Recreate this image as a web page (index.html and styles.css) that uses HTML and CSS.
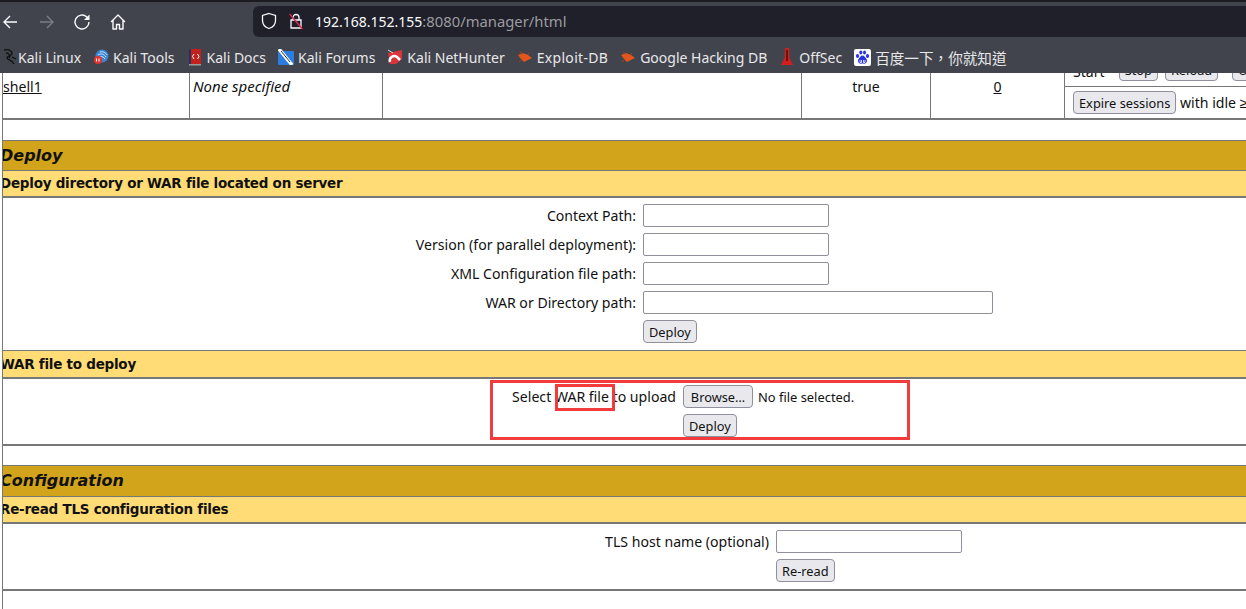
FILE: index.html

```html
<!DOCTYPE html>
<html>
<head>
  <title>/manager</title>
  <link rel="stylesheet" href="styles.css">
</head>
<body>
  <header class="browser">
    <div class="toolbar">
      <svg class="tool-icon" width="20" height="20" viewBox="0 0 20 20"><path d="M16 10H3M9 4l-6 6 6 6" fill="none" stroke="#fbfbfe" stroke-width="1.4"/></svg>
      <svg class="tool-icon" width="20" height="20" viewBox="0 0 20 20"><path d="M3 10h13M10 4l6 6-6 6" fill="none" stroke="#7c7e84" stroke-width="1.4"/></svg>
      <svg class="tool-icon" width="20" height="20" viewBox="0 0 20 20"><path d="M17 10a7 7 0 1 1-2.200-5.100L17 7" fill="none" stroke="#fbfbfe" stroke-width="1.4"/><path d="M17.500 2.500v5.500H12z" fill="#fbfbfe"/></svg>
      <svg class="tool-icon" width="20" height="20" viewBox="0 0 20 20"><path d="M3 10l7-7 7 7M5 8.500V17h3.500v-4.500h3V17H15V8.500" fill="none" stroke="#fbfbfe" stroke-width="1.4" stroke-linejoin="round"/></svg>
      <div class="urlbar">
        <svg width="16" height="18" viewBox="0 0 16 18"><path d="M8 1.500l6.500 2v5c0 4-2.700 6.800-6.500 8-3.800-1.200-6.500-4-6.500-8v-5z" fill="none" stroke="#fbfbfe" stroke-width="1.300"/></svg>
        <svg width="14" height="18" viewBox="1 0 14 18"><path d="M5 8V5.500a3 3 0 0 1 6 0V8M3 8h10v8H3z" fill="none" stroke="#fbfbfe" stroke-width="1.300"/><path d="M1.500 2l13 15" stroke="#e22850" stroke-width="1.500"/></svg>
        <span class="host">192.168.152.155<span class="url-rest">:8080/manager/html</span></span>
      </div>
    </div>
    <nav class="bookmarks">
      <a class="mark mark-first"><svg width="15" height="18" viewBox="0 0 15 18"><path d="M1 2c4-1 7 0 8 3 1 3-5 2-5 5 0 2 5 1 7 6M3 5c3 0 5 3 3 5M9 9l4 2" fill="none" stroke="#111" stroke-width="1.300"/></svg>Kali Linux</a>
      <a class="mark"><svg width="16" height="16" viewBox="0 0 16 16"><circle cx="9" cy="7" r="6.500" fill="#3a85d8"/><path d="M5 6c3-2 6-1 8 2M7 3c3-1 6 1 7 3M7 8c2-1 4 0 5 2" fill="none" stroke="#cfe2f7"/><circle cx="5" cy="11" r="4" fill="#e5322d"/><path d="M3.500 9.500v3M6 9.500v3" stroke="#fff"/></svg>Kali Tools</a>
      <a class="mark"><svg width="16" height="18" viewBox="0 0 16 18"><rect x="2" y="1" width="12" height="15" fill="#c4201d"/><rect x="2" y="1" width="2" height="15" fill="#2b2f5c"/><rect x="2" y="16" width="12" height="1.500" fill="#999"/><path d="M7 6l-1.500 2.500L7 11M10.500 6L12 8.500 10.500 11" fill="none" stroke="#fff"/></svg>Kali Docs</a>
      <a class="mark"><svg width="16" height="16" viewBox="0 0 16 16"><rect y="2" width="16" height="14" rx="1" fill="#2c7de0"/><path d="M1 0l13 16" stroke="#fff" stroke-width="3.500"/><path d="M3 2l9 11" stroke="#333"/></svg>Kali Forums</a>
      <a class="mark"><svg width="16" height="16" viewBox="0 0 16 16"><path d="M1 4l14-3v9l-6 5H3z" fill="#d8343a"/><path d="M3 13a4.500 4.500 0 0 1 7-5l3 3" fill="none" stroke="#fff" stroke-width="2.500"/><path d="M1 1l5 3" stroke="#ddd"/></svg>Kali NetHunter</a>
      <a class="mark mark-wide"><svg width="16" height="16" viewBox="0 0 16 16"><path d="M1 6l5-2 5 2 4 3-4 2-4 2-3-3z" fill="#e0561c"/><path d="M3 3l3 2M2 13l3-3M12 4l-2 2" stroke="#a8431c"/></svg>Exploit-DB</a>
      <a class="mark"><svg width="16" height="16" viewBox="0 0 16 16"><path d="M1 6l5-2 5 2 4 3-4 2-4 2-3-3z" fill="#e0561c"/><path d="M3 3l3 2M2 13l3-3M12 4l-2 2" stroke="#a8431c"/></svg>Google Hacking DB</a>
      <a class="mark"><svg width="16" height="18" viewBox="-1 0 16 18"><path d="M5 0h4l.5 10 3.500 7H1l3.500-7z" fill="#d11f1f"/><path d="M7 2v11" stroke="#4a0c0c" stroke-width="1.500"/></svg>OffSec</a>
      <a class="mark"><svg width="17" height="17" viewBox="0 0 17 17"><rect width="17" height="17" rx="2" fill="#fff"/><g fill="#2932e1"><ellipse cx="3.500" cy="7" rx="1.600" ry="2"/><ellipse cx="6.800" cy="3.500" rx="1.500" ry="2"/><ellipse cx="10.500" cy="3.500" rx="1.500" ry="2"/><ellipse cx="13.500" cy="7" rx="1.600" ry="2"/><path d="M8.500 6.500c2 0 2.500 2 4 3.500 1.500 2.500-.5 5-2.500 4.700-1-.2-2-.2-3 0-2 .3-4-2.200-2.500-4.700C6 8.500 6.500 6.500 8.500 6.500z"/></g><path d="M6 11v2.500h1.500V11M9.500 11v2.500H11V11" fill="none" stroke="#fff" stroke-width=".8"/></svg><span class="cjk">百度一下，你就知道</span></a>
    </nav>
  </header>

  <main class="page">
    <div class="app-row">
      <div class="cell cell-path"><a class="link">shell1</a></div>
      <div class="cell cell-version"><em>None specified</em></div>
      <div class="cell cell-name"></div>
      <div class="cell cell-running">true</div>
      <div class="cell cell-sessions"><a class="link">0</a></div>
      <div class="cell-commands">
        <div class="cmd-top">
          <span class="cmd-label">Start</span><button class="btn">Stop</button><button class="btn">Reload</button><button class="btn btn-undeploy">Undeploy</button>
        </div>
        <div class="cmd-bottom"><button class="btn">Expire sessions</button> with idle ≥ 30 minutes</div>
      </div>
    </div>

    <section class="section section-deploy">
      <h2 class="title">Deploy</h2>
      <h3 class="subtitle">Deploy directory or WAR file located on server</h3>
      <form class="server-form">
        <label class="lbl">Context Path:</label><input class="field" type="text">
        <label class="lbl">Version (for parallel deployment):</label><input class="field" type="text">
        <label class="lbl">XML Configuration file path:</label><input class="field" type="text">
        <label class="lbl">WAR or Directory path:</label><input class="field field-wide" type="text">
        <span></span><div><button type="button" class="btn">Deploy</button></div>
      </form>
      <h3 class="subtitle subtitle-war">WAR file to deploy</h3>
      <form class="upload-form">
        <label class="lbl">Select WAR file to upload</label>
        <div class="file-pick"><button type="button" class="btn btn-browse">Browse…</button><span>No file selected.</span></div>
        <span></span><div><button type="button" class="btn">Deploy</button></div>
      </form>
    </section>

    <section class="section section-config">
      <h2 class="title">Configuration</h2>
      <h3 class="subtitle">Re-read TLS configuration files</h3>
      <form class="tls-form">
        <label class="lbl">TLS host name (optional)</label><input class="field" type="text">
        <span></span><div><button type="button" class="btn">Re-read</button></div>
      </form>
    </section>

    <div class="mark-box mark-box-big"></div>
    <div class="mark-box mark-box-small"></div>
  </main>
</body>
</html>
```

FILE: styles.css

```css
html, body {
  margin: 0;
  height: 100%;
  overflow: hidden;
  background: #fff;
}

body {
  font-family: "Noto Sans", sans-serif;
  font-size: 14.1px;
  color: #111;
}

/* browser chrome */
.browser {
  background: #42444d;
  border-top: 2px solid #1c1b22;
  height: 71px;
  color: #fbfbfe;
}

.toolbar {
  height: 36px;
  display: flex;
  align-items: center;
  padding-left: 1px;
}

.tool-icon {
  margin: 4px 15.5px 0 0;
}

.urlbar {
  flex: 1;
  height: 31px;
  margin-left: 110px;
  margin-top: 2px;
  background: #1f2029;
  border-radius: 6px 0 0 6px;
  display: flex;
  align-items: center;
  padding-left: 8px;
  gap: 12px;
}

.host {
  font-size: 14px;
}

.url-rest {
  font-size: 14.8px;
  color: #9b9ba1;
}

.bookmarks {
  box-sizing: border-box;
  height: 35px;
  display: flex;
  align-items: center;
  gap: 12px;
  padding: 3px 0 0 3px;
  font-size: 14px;
}

.mark {
  display: flex;
  align-items: center;
  gap: 4px;
  white-space: nowrap;
  color: #e8e8ea;
}

.mark-first {
  gap: 0;
}

.mark-wide {
  letter-spacing: .3px;
}

.mark svg {
  flex: none;
}

.cjk {
  font-family: "Noto Sans CJK TC", "Noto Sans", sans-serif;
  font-size: 14.6px;
}

/* page */
.page {
  position: relative;
  height: 536px;
  overflow: hidden;
  margin-left: 2px;
  border-left: 1px solid #777;
}

.app-row {
  display: flex;
  height: 45px;
  border-bottom: 2px solid #777;
}

.cell {
  box-sizing: border-box;
  padding-top: 4px;
  border-right: 1px solid #777;
}

.cell-path { width: 187px; }
.cell-version { width: 193px; padding: 3px 0 0 3px; }
.cell-version em { font-size: 15px; }
.cell-name { width: 419px; }
.cell-running { width: 129px; text-align: center; }
.cell-sessions { width: 134px; text-align: center; }

.link {
  text-decoration: underline;
}

.cell-commands {
  flex: 1;
  display: flex;
  flex-direction: column;
  white-space: nowrap;
  overflow: hidden;
}

.cmd-top {
  height: 13px;
  border-bottom: 1px solid #777;
  display: flex;
  align-items: flex-end;
  gap: 7px;
  padding-left: 8px;
  overflow: hidden;
}

.cmd-top .btn {
  flex: none;
  margin-bottom: 5px;
}

.cmd-label {
  flex: none;
  line-height: 19px;
  margin-bottom: 5px;
  margin-right: 7px;
}

.btn-undeploy {
  margin-left: 7px;
}

.cmd-bottom {
  padding: 4px 0 0 8px;
}

.btn {
  font-family: inherit;
  font-size: 12.8px;
  height: 23px;
  padding: 0 5px;
  background: #e9e9ed;
  border: 1px solid #8f8f9d;
  border-radius: 4px;
  color: #111;
  box-sizing: border-box;
}

.btn-browse {
  width: 70px;
}

.section-deploy {
  margin-top: 20px;
}

.section-config {
  margin-top: 19px;
}

.section {
  border-top: 1px solid #777;
}

.title {
  margin: 0;
  background: #d2a41c;
  font: italic bold 16px/29px "DejaVu Sans", sans-serif;
  text-indent: -3px;
  color: #111;
  border-bottom: 1px solid #777;
}

.section-config .title {
  line-height: 30px;
}

.subtitle {
  margin: 0;
  height: 25px;
  background: #ffdc75;
  font: bold 13.5px/25px "DejaVu Sans", sans-serif;
  letter-spacing: -.25px;
  text-indent: -3px;
  border-bottom: 2px solid #777;
}

.subtitle-war {
  height: 26px;
  line-height: 26px;
  border-top: 1px solid #777;
}

.lbl {
  text-align: right;
  line-height: 23px;
}

.field {
  box-sizing: border-box;
  width: 186px;
  height: 23px;
  padding: 0 4px;
  border: 1px solid #8f8f9d;
  border-radius: 2px;
  background: #fff;
}

.field-wide {
  width: 350px;
}

.server-form,
.upload-form,
.tls-form {
  display: grid;
  column-gap: 7px;
  row-gap: 6px;
  box-sizing: border-box;
  align-content: start;
}

.server-form {
  grid-template-columns: 633px 1fr;
  height: 152px;
  padding-top: 6px;
}

.upload-form {
  grid-template-columns: 673px 1fr;
  height: 67px;
  padding-top: 6px;
  border-bottom: 2px solid #777;
}

.tls-form {
  grid-template-columns: 766px 1fr;
  height: 67px;
  padding-top: 6px;
  border-bottom: 2px solid #777;
}

.file-pick {
  display: flex;
  align-items: center;
  gap: 5px;
  font-size: 12.9px;
}

/* red annotation boxes drawn over the screenshot */
.mark-box {
  position: absolute;
  box-sizing: border-box;
  border: 3px solid #f43b3b;
}

.mark-box-big {
  left: 487px;
  top: 307px;
  width: 420px;
  height: 60px;
}

.mark-box-small {
  left: 552px;
  top: 311px;
  width: 60px;
  height: 27px;
}
```
